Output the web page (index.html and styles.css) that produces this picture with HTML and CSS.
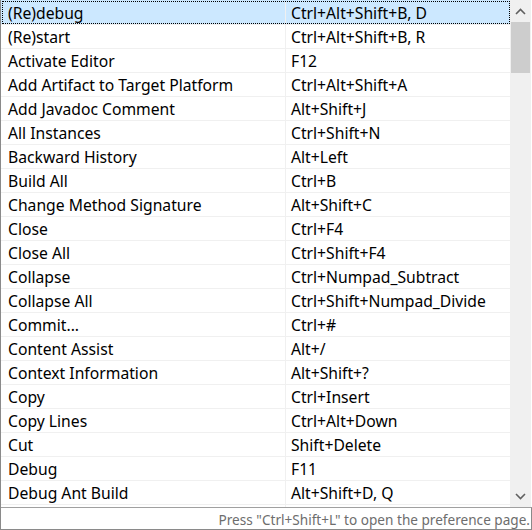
FILE: index.html
```html
<!DOCTYPE html>
<html>
<head>
<meta charset="utf-8">
<link rel="stylesheet" href="styles.css">
</head>
<body>
<div class="frame">
  <div class="table">
    <div class="list">
      <div class="row selected"><div class="c1">(Re)debug</div><div class="c2">Ctrl+Alt+Shift+B, D</div></div>
      <div class="row"><div class="c1">(Re)start</div><div class="c2">Ctrl+Alt+Shift+B, R</div></div>
      <div class="row"><div class="c1">Activate Editor</div><div class="c2">F12</div></div>
      <div class="row"><div class="c1">Add Artifact to Target Platform</div><div class="c2">Ctrl+Alt+Shift+A</div></div>
      <div class="row"><div class="c1">Add Javadoc Comment</div><div class="c2">Alt+Shift+J</div></div>
      <div class="row"><div class="c1">All Instances</div><div class="c2">Ctrl+Shift+N</div></div>
      <div class="row"><div class="c1">Backward History</div><div class="c2">Alt+Left</div></div>
      <div class="row"><div class="c1">Build All</div><div class="c2">Ctrl+B</div></div>
      <div class="row"><div class="c1">Change Method Signature</div><div class="c2">Alt+Shift+C</div></div>
      <div class="row"><div class="c1">Close</div><div class="c2">Ctrl+F4</div></div>
      <div class="row"><div class="c1">Close All</div><div class="c2">Ctrl+Shift+F4</div></div>
      <div class="row"><div class="c1">Collapse</div><div class="c2">Ctrl+Numpad_Subtract</div></div>
      <div class="row"><div class="c1">Collapse All</div><div class="c2">Ctrl+Shift+Numpad_Divide</div></div>
      <div class="row"><div class="c1">Commit...</div><div class="c2">Ctrl+#</div></div>
      <div class="row"><div class="c1">Content Assist</div><div class="c2">Alt+/</div></div>
      <div class="row"><div class="c1">Context Information</div><div class="c2">Alt+Shift+?</div></div>
      <div class="row"><div class="c1">Copy</div><div class="c2">Ctrl+Insert</div></div>
      <div class="row"><div class="c1">Copy Lines</div><div class="c2">Ctrl+Alt+Down</div></div>
      <div class="row"><div class="c1">Cut</div><div class="c2">Shift+Delete</div></div>
      <div class="row"><div class="c1">Debug</div><div class="c2">F11</div></div>
      <div class="row"><div class="c1">Debug Ant Build</div><div class="c2">Alt+Shift+D, Q</div></div>
      <div class="row"><div class="c1"></div><div class="c2"></div></div>
    </div>
    <div class="scrollbar">
      <div class="arrow"><svg width="11" height="7" viewBox="0 0 11 7"><path d="M1 6 L5.5 1.5 L10 6" fill="none" stroke="#606060" stroke-width="1.6"/></svg></div>
      <div class="track"><div class="thumb"></div></div>
      <div class="arrow"><svg width="11" height="7" viewBox="0 0 11 7"><path d="M1 1 L5.5 5.5 L10 1" fill="none" stroke="#606060" stroke-width="1.6"/></svg></div>
    </div>
  </div>
  <div class="status">Press "Ctrl+Shift+L" to open the preference page.</div>
</div>
</body>
</html>
```

FILE: styles.css
```css
html, body {
  margin: 0;
  padding: 0;
  background: #ffffff;
}
.frame {
  width: 531px;
  height: 530px;
  border-left: 1px solid #8a8a8a;
  display: flex;
  flex-direction: column;
  font-family: "Noto Sans", "Open Sans", sans-serif;
  font-size: 15.7px;
  color: #000;
  overflow: hidden;
}
.table {
  height: 507px;
  display: flex;
  overflow: hidden;
}
.list {
  width: 509px;
  overflow: hidden;
}
.row {
  display: flex;
  height: 23px;
  border-top: 1px solid #f0f0f0;
  line-height: 25px;
  white-space: nowrap;
  position: relative;
}
.row.selected {
  background: #cce8ff;
  border-top-color: #cce8ff;
}
.row.selected::after {
  content: "";
  position: absolute;
  left: 1px;
  right: 0;
  top: 0;
  bottom: 0;
  border: 1px dotted #000;
}
.c1 {
  width: 277px;
  padding-left: 7px;
  border-right: 1px solid #f0f0f0;
  overflow: hidden;
}
.c2 {
  padding-left: 5px;
  flex: 1;
  overflow: hidden;
}
.scrollbar {
  width: 21px;
  background: #f0f0f0;
  display: flex;
  flex-direction: column;
  align-items: center;
}
.arrow {
  height: 22px;
  width: 21px;
  display: flex;
  align-items: center;
  justify-content: center;
}
.track {
  flex: 1;
  width: 19px;
}
.thumb {
  height: 51px;
  background: #cdcdcd;
}
.status {
  height: 21px;
  border-top: 1px solid #a0a0a0;
  border-bottom: 1px solid #8a8a8a;
  border-right: 1px solid #8a8a8a;
  text-align: right;
  padding-right: 1px;
  color: #6d6d6d;
  font-size: 13.6px;
  line-height: 23px;
  white-space: nowrap;
  overflow: hidden;
}
```
